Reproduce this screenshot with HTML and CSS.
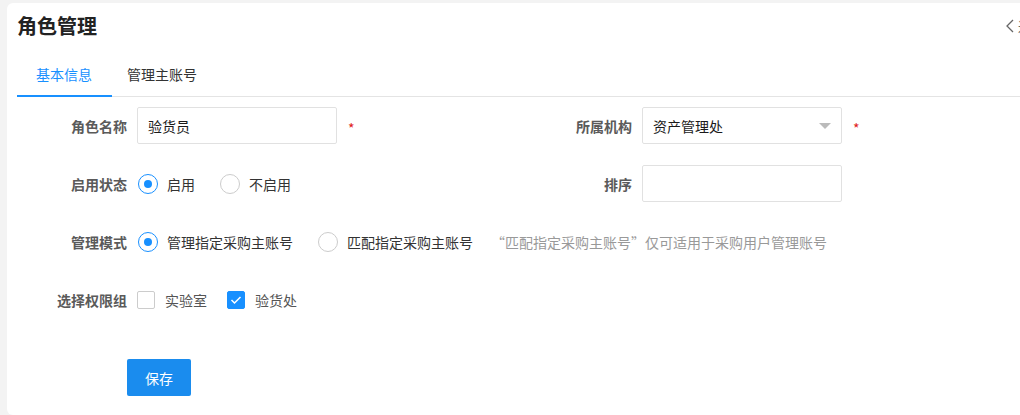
FILE: index.html
```html
<!DOCTYPE html>
<html lang="zh">
<head>
<meta charset="utf-8">
<title>角色管理</title>
<link rel="stylesheet" href="styles.css">
</head>
<body>
<div class="card">
  <div class="header">
    <h1 class="title">角色管理</h1>
    <a class="back">
      <svg width="12" height="14" viewBox="0 0 12 14"><path d="M9 1 L3 7 L9 13" fill="none" stroke="#666" stroke-width="1.3"/></svg>
      <span>返回</span>
    </a>
  </div>
  <div class="tabs">
    <div class="tab active">基本信息</div>
    <div class="tab">管理主账号</div>
  </div>
  <div class="form">
    <div class="row">
      <div class="item">
        <label class="label">角色名称</label>
        <div class="input">验货员</div>
        <span class="req">*</span>
      </div>
      <div class="item">
        <label class="label">所属机构</label>
        <div class="input select">资产管理处<span class="caret"></span></div>
        <span class="req">*</span>
      </div>
    </div>
    <div class="row">
      <div class="item">
        <label class="label">启用状态</label>
        <div class="options">
          <span class="opt"><span class="radio on"></span>启用</span>
          <span class="opt"><span class="radio"></span>不启用</span>
        </div>
      </div>
      <div class="item">
        <label class="label">排序</label>
        <div class="input"></div>
      </div>
    </div>
    <div class="row">
      <div class="item wide">
        <label class="label">管理模式</label>
        <div class="options">
          <span class="opt"><span class="radio on"></span>管理指定采购主账号</span>
          <span class="opt"><span class="radio"></span>匹配指定采购主账号</span>
          <span class="hint">“匹配指定采购主账号”仅可适用于采购用户管理账号</span>
        </div>
      </div>
    </div>
    <div class="row">
      <div class="item wide">
        <label class="label">选择权限组</label>
        <div class="options checks">
          <span class="opt"><span class="check"></span>实验室</span>
          <span class="opt"><span class="check on"><svg width="12" height="10" viewBox="0 0 12 10"><path d="M1.5 5 L4.5 8 L10.5 2" fill="none" stroke="#fff" stroke-width="1.5"/></svg></span>验货处</span>
        </div>
      </div>
    </div>
    <div class="actions">
      <button class="btn">保存</button>
    </div>
  </div>
</div>
</body>
</html>
```

FILE: styles.css
```css
* { box-sizing: border-box; }
html, body {
  margin: 0;
  padding: 0;
  background: #f3f3f3;
  overflow: hidden;
  width: 1020px;
  height: 415px;
}
body {
  font-family: "Noto Sans CJK SC", "Noto Sans", sans-serif;
  font-size: 14px;
  color: #333;
  padding: 3px 0 0 7px;
}
.card {
  width: 1060px;
  height: 412px;
  background: #fff;
  border-radius: 6px;
  padding-left: 10px;
  overflow: hidden;
}
.header {
  display: flex;
  align-items: center;
  height: 46px;
  width: 1010px;
  justify-content: space-between;
}
.title {
  margin: 0;
  font-size: 20px;
  font-weight: 700;
  color: #222;
  line-height: 46px;
}
.back {
  display: flex;
  align-items: center;
  gap: 2px;
  color: #666;
  font-size: 14px;
  margin-right: -19px;
}
.tabs {
  display: flex;
  height: 48px;
  border-bottom: 1px solid #e4e4e4;
  align-items: stretch;
}
.tab {
  display: flex;
  align-items: center;
  padding: 4px 15px 0 15px;
  font-size: 14px;
  color: #333;
  border-bottom: 2px solid transparent;
  margin-bottom: -1px;
}
.tab.active {
  color: #1890ff;
  border-bottom-color: #1890ff;
  padding: 4px 20px 0 19px;
}
.form {
  padding-top: 10px;
}
.row {
  display: flex;
  height: 37px;
  margin-bottom: 21px;
}
.item {
  display: flex;
  align-items: center;
  width: 505px;
}
.item.wide { width: auto; }
.label {
  width: 110px;
  margin-right: 10px;
  text-align: right;
  font-weight: 700;
  color: #5a5a5a;
  font-size: 14px;
  flex-shrink: 0;
}
.input {
  width: 200px;
  height: 37px;
  border: 1px solid #e1e1e1;
  border-radius: 2px;
  padding: 0 10px;
  display: flex;
  align-items: center;
  color: #1a1a1a;
  position: relative;
}
.select .caret {
  position: absolute;
  right: 10px;
  top: 15px;
  width: 0;
  height: 0;
  border-left: 6px solid transparent;
  border-right: 6px solid transparent;
  border-top: 6px solid #bbb;
}
.req {
  color: #e02020;
  margin-left: 11px;
  font-size: 14px;
  padding-top: 4px;
}
.options {
  display: flex;
  align-items: center;
  color: #333;
}
.opt {
  display: flex;
  align-items: center;
  margin-right: 24px;
}
.radio {
  width: 20px;
  height: 20px;
  border-radius: 50%;
  border: 1px solid #ccc;
  margin-right: 9px;
  margin-left: 1px;
  display: inline-flex;
  align-items: center;
  justify-content: center;
}
.radio.on { border-color: #1890ff; }
.radio.on::after {
  content: "";
  width: 8px;
  height: 8px;
  border-radius: 50%;
  background: #1890ff;
}
.hint {
  color: #999;
  margin-left: -6px;
}
.checks .opt { margin-right: 20px; color: #555; }
.check {
  width: 18px;
  height: 18px;
  border: 1px solid #ccc;
  border-radius: 2px;
  margin-right: 10px;
  display: inline-flex;
  align-items: center;
  justify-content: center;
}
.check.on {
  background: #1890ff;
  border-color: #1890ff;
}
.actions {
  padding-left: 110px;
  margin-top: 41px;
}
.btn {
  width: 64px;
  height: 37px;
  background: #1a8cee;
  color: #fff;
  border: none;
  border-radius: 2px;
  font-family: inherit;
  font-size: 14px;
}
```
